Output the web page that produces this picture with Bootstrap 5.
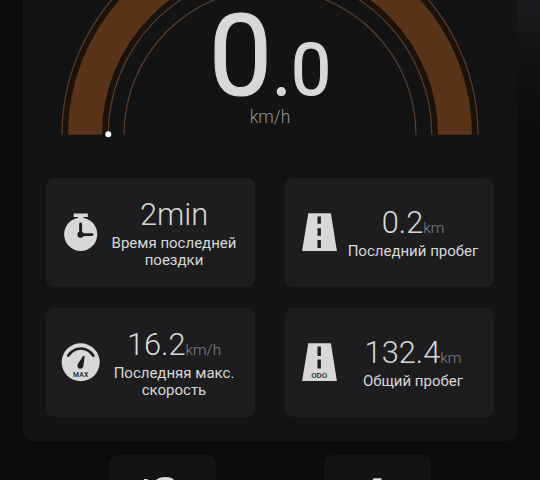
<!DOCTYPE html>
<html lang="ru">
<head>
<meta charset="utf-8">
<meta name="viewport" content="width=device-width, initial-scale=1">
<title>Speed</title>
<link href="https://cdn.jsdelivr.net/npm/bootstrap@5.3.0/dist/css/bootstrap.min.css" rel="stylesheet">
<style>
html,body{height:480px}
body{background:#0b0b0b;color:#d8d8d8;font-family:Roboto,"Noto Sans",sans-serif;width:540px}
.screen{height:480px;background:linear-gradient(180deg,#1a1b1e 0,#111112 70px,#0b0b0b 150px) right top/23px 150px no-repeat #0b0b0b}
.panel{width:494px;height:441px;margin-left:23px;background:#131314;border-radius:0 0 9px 9px}
.gauge{height:178px}
.gauge>svg{left:0;top:0}
.reading{height:103px;line-height:1;-webkit-text-stroke:1.1px #d8d8d8}
.reading .whole{font-size:113px;line-height:113px}
.reading .frac{font-size:71.5px}
.speed-unit{font-size:17.5px;font-weight:300;line-height:22px;color:#939393;padding-top:3px}
.tiles{display:grid;grid-template-columns:209px 209px;gap:21.5px 30px;padding:0 23px}
.tile{height:108.5px;background:#1d1d20;border-radius:8px;padding-left:15px;padding-right:8px}
.tile svg{width:40px;height:40px;flex:none}
.tall-text{padding-top:1.5px}
.value{font-size:30.8px;font-weight:300;line-height:36px}
.value span{font-size:15.3px;line-height:1;color:#818184}
.caption-text{font-size:15px;line-height:17px;padding-top:2px;white-space:nowrap}
.dock{padding:14px 109px 0 108.5px;height:39px}
.dock-btn{width:107px;height:25px;background:#131314;border-radius:8px 8px 0 0}
</style>
</head>
<body>
<main class="screen overflow-hidden">
 <section class="panel">
  <div class="gauge position-relative">
   <svg class="position-absolute" width="494" height="178" fill="none">
    <path d="M62 134.7a185 185 0 0 1 370 0" stroke="#1b120c" stroke-width="46"/>
    <path d="M62 134.7a185 185 0 0 1 370 0" stroke="#5a3418" stroke-width="34"/>
    <path d="M39 134.7a208 208 0 0 1 416 0M85.2 134.7a161.8 161.8 0 0 1 323.6 0M101 134.7a146 146 0 0 1 292 0" stroke="#5b3f2c" stroke-width="1.2"/>
    <circle cx="85.3" cy="134.3" r="3" fill="#fff"/>
   </svg>
   <div class="position-relative text-center">
    <div class="reading"><span class="whole">0</span><span class="frac">.0</span></div>
    <div class="speed-unit">km/h</div>
   </div>
  </div>
  <div class="tiles">
   <div class="tile d-flex align-items-center">
    <svg viewBox="0 0 40 40"><circle cx="19.7" cy="22.3" r="16.6" fill="#d8d8d8"/><path d="M12.6 1.6h14.2v3.3h-4.3v3h-5.6v-3h-4.3z" fill="#d8d8d8"/><path d="M19.6 12v10.6H31" stroke="#1d1d20" stroke-width="2.9" fill="none" stroke-linecap="round"/><circle cx="19.6" cy="22.6" r="3.2" fill="#1d1d20"/></svg>
    <div class="tall-text flex-grow-1 text-center"><div class="value">2min</div><div class="caption-text">Время последней<br>поездки</div></div>
   </div>
   <div class="tile d-flex align-items-center">
    <svg viewBox="0 0 40 40"><path d="M8.3 1.3h22.6L36.9 39H2.1z" fill="#d8d8d8"/><path d="M19.2 4.5v7.3m0 4.5v7.4m0 4.3v8" stroke="#1d1d20" stroke-width="3.4"/></svg>
    <div class="flex-grow-1 text-center"><div class="value">0.2<span>km</span></div><div class="caption-text">Последний пробег</div></div>
   </div>
   <div class="tile d-flex align-items-center">
    <svg viewBox="0 0 40 40"><circle cx="19.7" cy="20.2" r="19" fill="#d8d8d8"/><path d="M7.2 13.7Q12.2 6.6 19.8 6.6T32.4 13.7" stroke="#1d1d20" stroke-width="2.5" fill="none" stroke-linecap="round"/><path d="M22.3 13.8 17.1 21.6Q15.3 24.9 18 26.4 20.8 27.6 22.3 24.5L23.7 14.2z" fill="#1d1d20"/><text x="19.7" y="34.8" text-anchor="middle" font-size="6.8" font-weight="500" letter-spacing=".2" fill="#1d1d20">MAX</text></svg>
    <div class="tall-text flex-grow-1 text-center"><div class="value">16.2<span>km/h</span></div><div class="caption-text">Последняя макс.<br>скорость</div></div>
   </div>
   <div class="tile d-flex align-items-center">
    <svg viewBox="0 0 40 40"><path d="M8.3 1.3h22.6L36.9 39H2.1z" fill="#d8d8d8"/><path d="M19.2 4.5v9.6m0 3.4v9" stroke="#1d1d20" stroke-width="3.4"/><text x="19.2" y="36" text-anchor="middle" font-size="7.8" font-weight="500" fill="#1d1d20" textLength="16" lengthAdjust="spacingAndGlyphs">ODO</text></svg>
    <div class="flex-grow-1 text-center"><div class="value">132.4<span>km</span></div><div class="caption-text">Общий пробег</div></div>
   </div>
  </div>
 </section>
 <nav class="dock d-flex justify-content-between">
  <div class="dock-btn"><svg class="d-block" width="107" height="25"><path d="M35 24h3l3 2h-6zM47 25Q50 22 56.5 22T65 25z" fill="#ddd9df"/></svg></div>
  <div class="dock-btn"><svg class="d-block" width="107" height="25"><path d="M49.5 23.3h8V25h-9z" fill="#ddd9df"/></svg></div>
 </nav>
</main>
<script src="https://cdn.jsdelivr.net/npm/bootstrap@5.3.0/dist/js/bootstrap.bundle.min.js"></script>
</body>
</html>
